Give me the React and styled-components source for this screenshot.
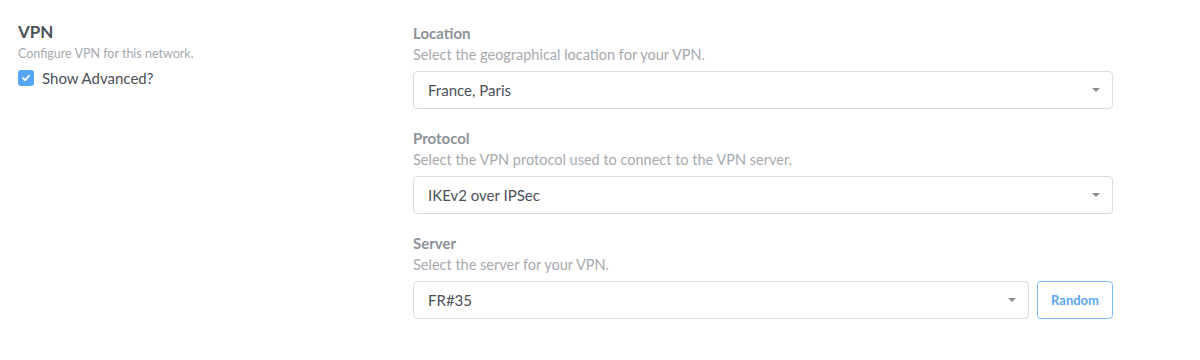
import React, { useState } from "react";
import styled, { createGlobalStyle } from "styled-components";

const GlobalStyle = createGlobalStyle`
  body {
    margin: 0;
    background: #ffffff;
    font-family: "Lato", "Open Sans", "Liberation Sans", sans-serif;
  }
`;

const Page = styled.div`
  display: grid;
  grid-template-columns: 395px 700px;
  padding: 21px 18px 0;
  height: 360px;
  box-sizing: border-box;
`;

const Intro = styled.div`
  display: flex;
  flex-direction: column;
`;

const Title = styled.h2`
  margin: 0;
  font-size: 17px;
  font-weight: 700;
  line-height: 22px;
  color: #4b5059;
`;

const Hint = styled.p`
  margin: ${(p) => (p.small ? "2px 0 0" : "0")};
  font-size: ${(p) => (p.small ? "12.5px" : "14.5px")};
  line-height: ${(p) => (p.small ? "18px" : "22px")};
  color: #a6aab0;
`;

const CheckRow = styled.label`
  display: flex;
  align-items: center;
  gap: 8px;
  margin-top: 6px;
  font-size: 15px;
  color: #4b5059;
  cursor: pointer;
`;

const Box = styled.span`
  width: 16px;
  height: 16px;
  border-radius: 3px;
  background: ${(p) => (p.checked ? "#55a4f6" : "#fff")};
  border: ${(p) => (p.checked ? "none" : "1px solid #ccd0d5")};
  display: flex;
  align-items: center;
  justify-content: center;
`;

const Fields = styled.div`
  display: flex;
  flex-direction: column;
  gap: 18px;
  padding-top: 1px;
`;

const Field = styled.div`
  display: flex;
  flex-direction: column;
`;

const Label = styled.div`
  font-size: 15px;
  font-weight: 700;
  line-height: 22px;
  color: #8d9198;
`;

const Control = styled.div`
  display: flex;
  gap: 8px;
  margin-top: 5px;
`;

const Select = styled.div`
  flex: 1;
  height: 38px;
  box-sizing: border-box;
  border: 1px solid #d9dce0;
  border-radius: 4px;
  display: flex;
  align-items: center;
  justify-content: space-between;
  padding: 0 12px 0 14px;
  font-size: 15px;
  color: #4b5059;
`;

const Caret = styled.span`
  width: 0;
  height: 0;
  border-left: 4px solid transparent;
  border-right: 4px solid transparent;
  border-top: 4px solid #8a8d92;
`;

const Button = styled.button`
  width: 76px;
  height: 38px;
  border: 1px solid #7cbaf7;
  border-radius: 4px;
  background: #fff;
  color: #5aa7f5;
  font-family: inherit;
  font-size: 13px;
  font-weight: 700;
  cursor: pointer;
`;

const fields = [
  { label: "Location", hint: "Select the geographical location for your VPN.", value: "France, Paris" },
  { label: "Protocol", hint: "Select the VPN protocol used to connect to the VPN server.", value: "IKEv2 over IPSec" },
  { label: "Server", hint: "Select the server for your VPN.", value: "FR#35", action: "Random" },
];

export default function App() {
  const [advanced, setAdvanced] = useState(true);
  return (
    <>
      <GlobalStyle />
      <Page>
        <Intro>
          <Title>VPN</Title>
          <Hint small>Configure VPN for this network.</Hint>
          <CheckRow onClick={() => setAdvanced(!advanced)}>
            <Box checked={advanced}>
              {advanced && (
                <svg width="10" height="10" viewBox="0 0 10 10">
                  <path d="M2 5.2l2 2 4-4.4" fill="none" stroke="#fff" strokeWidth="1.8" strokeLinecap="round" strokeLinejoin="round" />
                </svg>
              )}
            </Box>
            Show Advanced?
          </CheckRow>
        </Intro>
        <Fields>
          {fields.map((f) => (
            <Field key={f.label}>
              <Label>{f.label}</Label>
              <Hint>{f.hint}</Hint>
              <Control>
                <Select>
                  {f.value}
                  <Caret />
                </Select>
                {f.action && <Button>{f.action}</Button>}
              </Control>
            </Field>
          ))}
        </Fields>
      </Page>
    </>
  );
}
